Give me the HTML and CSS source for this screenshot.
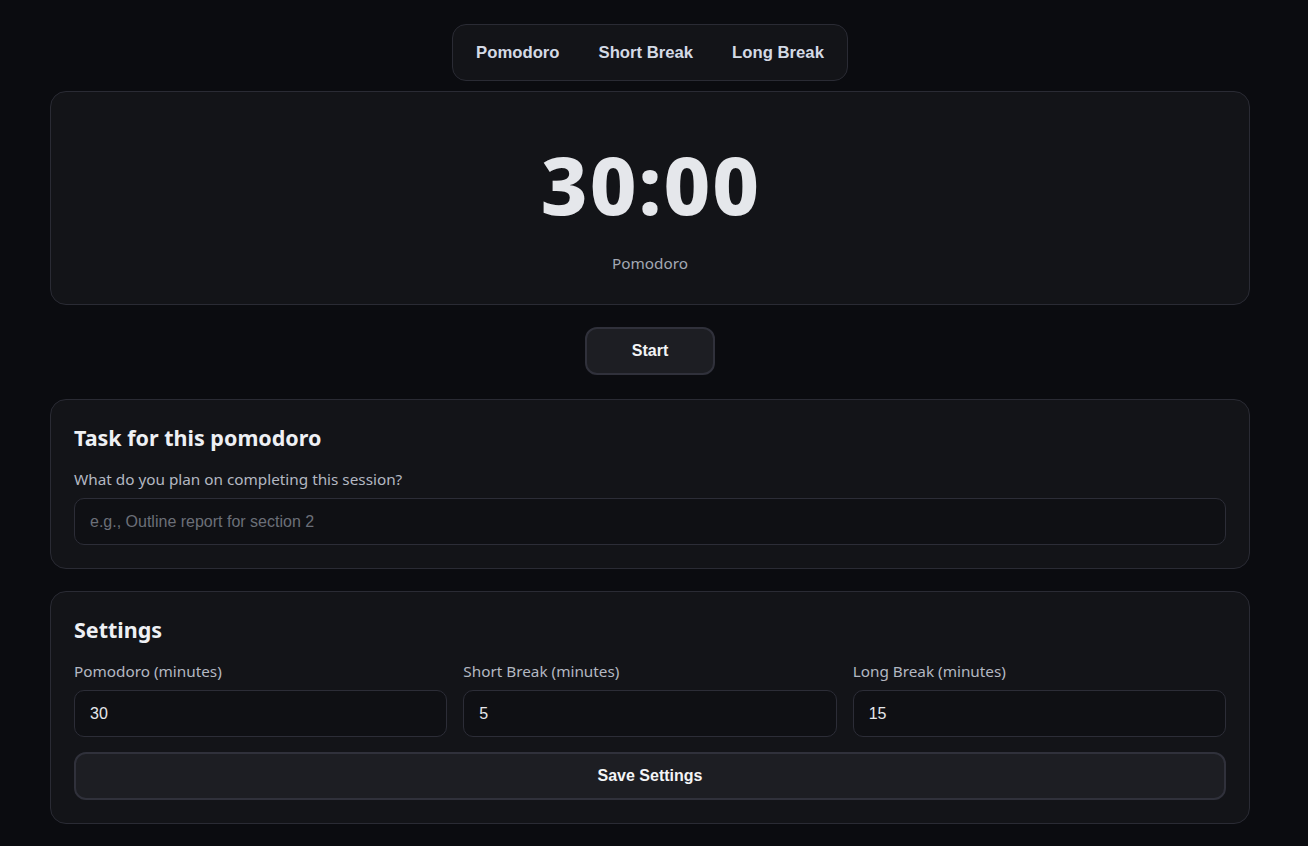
FILE: index.html
```html
<!DOCTYPE html>
<html lang="en">
<head>
<meta charset="utf-8">
<title>Pomodoro Timer</title>
<link rel="stylesheet" href="styles.css">
</head>
<body>
<main class="app">
  <nav class="tabs">
    <button class="tab">Pomodoro</button>
    <button class="tab">Short Break</button>
    <button class="tab">Long Break</button>
  </nav>

  <section class="card timer-card">
    <div class="time">30:00</div>
    <div class="mode">Pomodoro</div>
  </section>

  <div class="controls">
    <button class="btn start">Start</button>
  </div>

  <section class="card">
    <h2 class="card-title">Task for this pomodoro</h2>
    <label class="label" for="task">What do you plan on completing this session?</label>
    <input id="task" class="input" type="text" placeholder="e.g., Outline report for section 2">
  </section>

  <section class="card settings">
    <h2 class="card-title">Settings</h2>
    <div class="fields">
      <div class="field">
        <label class="label" for="p">Pomodoro (minutes)</label>
        <input id="p" class="input" type="number" value="30">
      </div>
      <div class="field">
        <label class="label" for="s">Short Break (minutes)</label>
        <input id="s" class="input" type="number" value="5">
      </div>
      <div class="field">
        <label class="label" for="l">Long Break (minutes)</label>
        <input id="l" class="input" type="number" value="15">
      </div>
    </div>
    <button class="btn save">Save Settings</button>
  </section>
</main>
</body>
</html>
```

FILE: styles.css
```css
* { box-sizing: border-box; }

html, body {
  margin: 0;
  background: #0b0c10;
}

body {
  font-family: "Noto Sans", "Open Sans", sans-serif;
  color: #e5e7eb;
  padding: 24px 58px 40px 50px;
}

.app {
  max-width: 1200px;
  margin: 0 auto;
  display: flex;
  flex-direction: column;
}

.tabs {
  align-self: center;
  display: flex;
  gap: 5px;
  padding: 6px;
  background: #131418;
  border: 1px solid #2a2b34;
  border-radius: 14px;
  margin-bottom: 10px;
}

.tab {
  font-family: "Liberation Sans", Arial, sans-serif;
  font-weight: 700;
  font-size: 16.7px;
  color: #d4dae5;
  background: transparent;
  border: none;
  height: 43px;
  padding: 0 17px;
  border-radius: 10px;
  cursor: pointer;
}

.card {
  background: #131418;
  border: 1px solid #2a2b34;
  border-radius: 16px;
  padding: 23px;
}

.timer-card {
  height: 214px;
  display: flex;
  flex-direction: column;
  align-items: center;
  padding-top: 51px;
}

.time {
  font-size: 81px;
  font-weight: 800;
  line-height: 1;
  color: #e5e7eb;
  letter-spacing: 2px;
  padding-left: 2px;
}

.mode {
  margin-top: 29px;
  font-size: 15.3px;
  line-height: 1.4;
  color: #a3a8b3;
}

.controls {
  display: flex;
  justify-content: center;
  margin: 22px 0 24px;
}

.btn {
  font-family: "Liberation Sans", Arial, sans-serif;
  font-weight: 700;
  font-size: 16px;
  color: #f3f4f6;
  background: #1d1e23;
  border: 2px solid #30313b;
  border-radius: 12px;
  height: 48px;
  cursor: pointer;
}

.start {
  width: 130px;
}

.card-title {
  margin: 0 0 16px;
  font-size: 21.5px;
  font-weight: 700;
  line-height: 30px;
  color: #eef0f4;
}

.label {
  display: block;
  font-size: 15.3px;
  line-height: 21px;
  color: #b3b8c2;
  margin-bottom: 8px;
}

.input {
  display: block;
  width: 100%;
  height: 47px;
  padding: 0 15px;
  font-family: "Liberation Sans", Arial, sans-serif;
  font-size: 16px;
  color: #e5e7eb;
  background: #0f1014;
  border: 1px solid #2c2d37;
  border-radius: 10px;
  outline: none;
  -moz-appearance: textfield;
}

.input::placeholder {
  color: #6b6f78;
}

.input::-webkit-outer-spin-button,
.input::-webkit-inner-spin-button {
  -webkit-appearance: none;
  margin: 0;
}

.settings {
  margin-top: 22px;
}

.fields {
  display: grid;
  grid-template-columns: repeat(3, 1fr);
  gap: 16px;
}

.save {
  width: 100%;
  margin-top: 15px;
}
```
